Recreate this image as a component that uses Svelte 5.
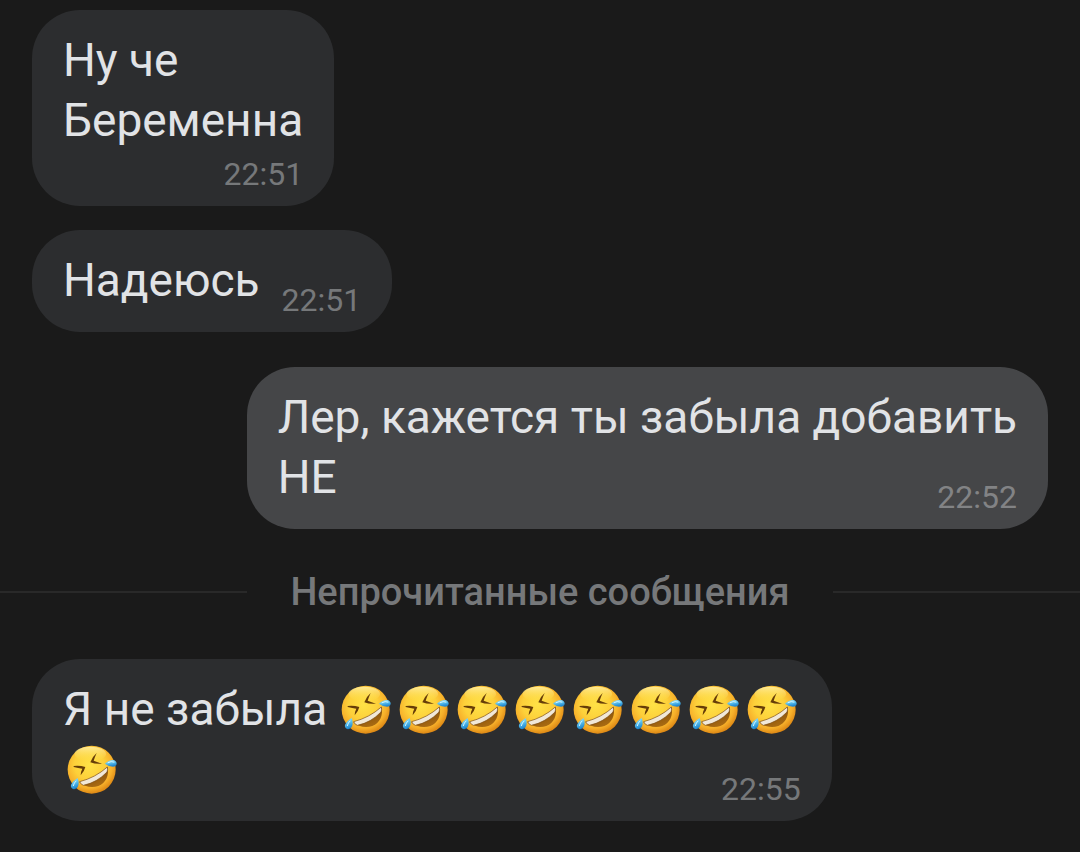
<script>
    let messages = [
        { text: "Ну че\nБеременна", time: "22:51", below: true },
        { text: "Надеюсь", time: "22:51" },
        { text: "Лер, кажется ты забыла добавить\nНЕ", time: "22:52", mine: true }
    ];

    // laughs: how many faces stand in each row after the text
    let unread = [
        { text: "Я не забыла ", laughs: [8, 1], time: "22:55" }
    ];
</script>

<!-- shared drawing for the laughing face -->
<svg class="sprite" aria-hidden="true">
    <defs>
        <radialGradient id="face" cx="0.45" cy="0.4" r="0.62">
            <stop offset="0" stop-color="#ffe246" />
            <stop offset="0.5" stop-color="#fdd03a" />
            <stop offset="0.78" stop-color="#f7b02a" />
            <stop offset="1" stop-color="#d98212" />
        </radialGradient>
        <linearGradient id="shine" x1="0" y1="0" x2="0" y2="1">
            <stop offset="0" stop-color="#fff3b0" stop-opacity="0.8" />
            <stop offset="1" stop-color="#ffe350" stop-opacity="0" />
        </linearGradient>
        <linearGradient id="mouth" x1="0" y1="0" x2="0.5" y2="1">
            <stop offset="0" stop-color="#6b3c05" />
            <stop offset="1" stop-color="#a86a12" />
        </linearGradient>
        <linearGradient id="tear" x1="0" y1="0" x2="0.3" y2="1">
            <stop offset="0" stop-color="#a5e6fb" />
            <stop offset="0.5" stop-color="#5fc3ef" />
            <stop offset="1" stop-color="#1f87cf" />
        </linearGradient>
        <symbol id="rofl" viewBox="9 21 162 162">
            <circle cx="95" cy="101" r="72" fill="url(#face)" />
            <ellipse cx="91" cy="54" rx="47" ry="22" fill="url(#shine)" />
            <path d="M41 90 Q60 88 76 93 Q73 106 62 118 Q62 107 67 98 Q55 96 41 93 Z" fill="#663d08" />
            <path d="M110 51 Q96 63 91 79 Q107 85 126 83 Q113 79 101 74 Q105 62 110 51 Z" fill="#663d08" />
            <path d="M58 139 Q108 130 143 92 C148 117 138 141 115 150 C96 157 72 152 58 139 Z" fill="url(#mouth)" />
            <path d="M59 137 Q106 125 142 93 Q144 101 141 108 Q112 139 70 148 Q61 144 59 137 Z" fill="#f1e8d8" stroke="#7a4a10" stroke-width="2" />
            <path d="M135 83 Q148 71 160 72 Q170 75 170 83 Q169 91 159 92 Q146 92 135 83 Z" fill="url(#tear)" />
            <path d="M53 126 Q59 143 53 153 Q48 161 39 159 Q31 155 33 147 Q37 136 53 126 Z" fill="url(#tear)" />
            <path d="M144 80 Q154 74 162 78" fill="none" stroke="#d4f6ff" stroke-width="3" stroke-linecap="round" />
            <path d="M40 149 Q42 140 48 135" fill="none" stroke="#d4f6ff" stroke-width="3" stroke-linecap="round" />
        </symbol>
    </defs>
</svg>

{#snippet bubble(message)}
    <article class="bubble" class:mine={message.mine}>
        <p>{message.text}{#if message.laughs}<span class="laughs">{#each message.laughs as count, row}{#if row > 0}<br />{/if}{#each Array(count) as _}<svg class="emoji" role="img" aria-label="🤣"><use href="#rofl" /></svg>{/each}{/each}</span>{/if}<time class:below={message.below}>{message.time}</time></p>
    </article>
{/snippet}

<main>
    {#each messages as message}
        {@render bubble(message)}
    {/each}

    <h2 class="divider">Непрочитанные сообщения</h2>

    {#each unread as message}
        {@render bubble(message)}
    {/each}
</main>

<style>
    :global(body) {
        background: #1a1a1a;
    }

    .sprite {
        position: absolute;
        width: 0;
        height: 0;
    }

    main {
        display: flex;
        flex-direction: column;
        align-items: flex-start;
        gap: 24px;
        padding: 10px 0 30px;
        font-family: Roboto, sans-serif;
        color: #e1e3e6;
    }

    .bubble {
        box-sizing: border-box;
        max-width: 808px;
        margin: 0 32px;
        padding: 20px 31px 12px;
        border-radius: 48px;
        background: #2c2d2f;
    }

    .mine {
        align-self: flex-end;
        margin-top: 11px;
        background: #454648;
    }

    p {
        display: flow-root;
        margin: 0;
        font-size: 46px;
        line-height: 60px;
        white-space: pre-line;
    }

    time {
        float: right;
        margin: 30px 0 0 22px;
        font-size: 32px;
        line-height: 40px;
        color: #76787a;
    }

    .mine time {
        color: #828385;
    }

    time.below {
        display: block;
        float: none;
        margin: 4px 0 0;
        text-align: right;
    }

    .laughs {
        margin-left: -2px;
    }

    .emoji {
        width: 54px;
        height: 54px;
        margin-right: 4px;
        vertical-align: -12px;
    }

    .divider {
        display: flex;
        align-items: center;
        align-self: stretch;
        gap: 43px;
        margin: 17px 0 21px;
        font-size: 38px;
        font-weight: 500;
        line-height: 44px;
        color: #76787a;
    }

    .divider::before,
    .divider::after {
        content: "";
        flex: 1;
        height: 2px;
        background: #292929;
    }
</style>
